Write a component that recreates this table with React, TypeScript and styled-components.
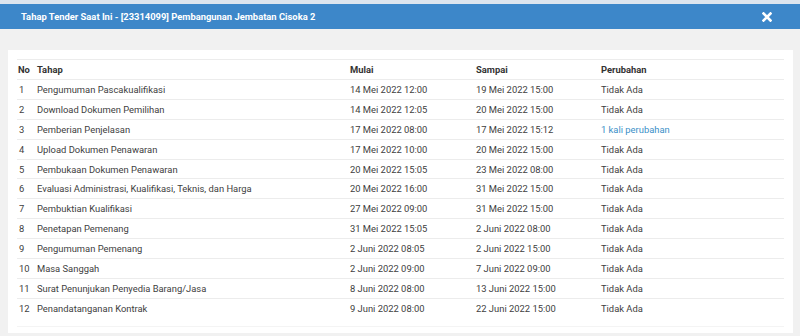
import React from "react";
import styled, { createGlobalStyle } from "styled-components";

const GlobalStyle = createGlobalStyle`
  html, body {
    margin: 0;
    padding: 0;
    background: #f1f1f1;
    font-family: Roboto, "Liberation Sans", sans-serif;
  }
`;

type Stage = {
  name: string;
  start: string;
  end: string;
  change?: string;
};

const stages: Stage[] = [
  { name: "Pengumuman Pascakualifikasi", start: "14 Mei 2022 12:00", end: "19 Mei 2022 15:00" },
  { name: "Download Dokumen Pemilihan", start: "14 Mei 2022 12:05", end: "20 Mei 2022 15:00" },
  { name: "Pemberian Penjelasan", start: "17 Mei 2022 08:00", end: "17 Mei 2022 15:12", change: "1 kali perubahan" },
  { name: "Upload Dokumen Penawaran", start: "17 Mei 2022 10:00", end: "20 Mei 2022 15:00" },
  { name: "Pembukaan Dokumen Penawaran", start: "20 Mei 2022 15:05", end: "23 Mei 2022 08:00" },
  { name: "Evaluasi Administrasi, Kualifikasi, Teknis, dan Harga", start: "20 Mei 2022 16:00", end: "31 Mei 2022 15:00" },
  { name: "Pembuktian Kualifikasi", start: "27 Mei 2022 09:00", end: "31 Mei 2022 15:00" },
  { name: "Penetapan Pemenang", start: "31 Mei 2022 15:05", end: "2 Juni 2022 08:00" },
  { name: "Pengumuman Pemenang", start: "2 Juni 2022 08:05", end: "2 Juni 2022 15:00" },
  { name: "Masa Sanggah", start: "2 Juni 2022 09:00", end: "7 Juni 2022 09:00" },
  { name: "Surat Penunjukan Penyedia Barang/Jasa", start: "8 Juni 2022 08:00", end: "13 Juni 2022 15:00" },
  { name: "Penandatanganan Kontrak", start: "9 Juni 2022 08:00", end: "22 Juni 2022 15:00" },
];

const Modal = styled.div`
  border-top: 4px solid #dde5ee;
  background: #f1f1f1;
  height: 332px;
`;

const Header = styled.div`
  height: 25px;
  background: #3d87c9;
  display: flex;
  align-items: center;
  justify-content: space-between;
  padding: 0 28px 0 21px;
`;

const Title = styled.h4`
  margin: 0;
  color: #ffffff;
  font-size: 9.4px;
  font-weight: 700;
`;

const Close = styled.button`
  border: 0;
  background: none;
  padding: 0;
  display: flex;
  cursor: pointer;
`;

const Body = styled.div`
  padding: 21px 7px 0 8px;
`;

const Card = styled.div`
  background: #ffffff;
  padding: 9px 9px 6px 9px;
`;

const Table = styled.table`
  width: 100%;
  border-collapse: collapse;
  table-layout: fixed;
  font-size: 9.4px;
  color: #404040;
`;

const Th = styled.th<{ $w?: number }>`
  width: ${(p) => (p.$w ? `${p.$w}px` : "auto")};
  text-align: left;
  font-weight: 700;
  height: 19px;
  padding: 0 0 0 1px;
  border-top: 1px solid #ececec;
  color: #333;
`;

const Td = styled.td`
  height: 18.9px;
  padding: 0 0 0 1px;
  border-top: 1px solid #ececec;
  white-space: nowrap;
`;

const Num = styled(Td)`
  padding-left: 2px;
`;

const Link = styled.a`
  color: #3a8fc8;
  text-decoration: none;
`;

const Footer = styled.div`
  border-top: 1px solid #f4f4f4;
  margin-top: 8px;
`;

const CloseIcon = () => (
  <svg width="10" height="10" viewBox="0 0 10 10">
    <path d="M1.5 1.5 L8.5 8.5 M8.5 1.5 L1.5 8.5" stroke="#fff" strokeWidth="2.6" strokeLinecap="square" />
  </svg>
);

const App = () => (
  <>
    <GlobalStyle />
    <Modal>
      <Header>
        <Title>Tahap Tender Saat Ini - [23314099] Pembangunan Jembatan Cisoka 2</Title>
        <Close aria-label="Tutup">
          <CloseIcon />
        </Close>
      </Header>
      <Body>
        <Card>
          <Table>
            <thead>
              <tr>
                <Th $w={18}>No</Th>
                <Th $w={312}>Tahap</Th>
                <Th $w={125}>Mulai</Th>
                <Th $w={124}>Sampai</Th>
                <Th>Perubahan</Th>
              </tr>
            </thead>
            <tbody>
              {stages.map((s, i) => (
                <tr key={s.name}>
                  <Num>{i + 1}</Num>
                  <Td>{s.name}</Td>
                  <Td>{s.start}</Td>
                  <Td>{s.end}</Td>
                  <Td>{s.change ? <Link href="#">{s.change}</Link> : "Tidak Ada"}</Td>
                </tr>
              ))}
            </tbody>
          </Table>
          <Footer />
        </Card>
      </Body>
    </Modal>
  </>
);

export default App;
